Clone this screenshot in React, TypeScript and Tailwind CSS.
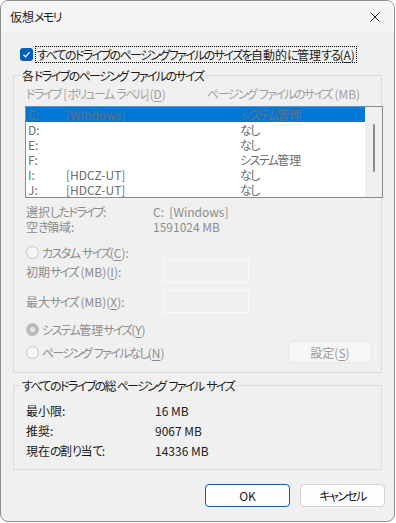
import React from "react";

const drives = [
  { d: "C:", label: "[Windows]", size: "システム管理", sel: true },
  { d: "D:", label: "", size: "なし" },
  { d: "E:", label: "", size: "なし" },
  { d: "F:", label: "", size: "システム管理" },
  { d: "I:", label: "[HDCZ-UT]", size: "なし" },
  { d: "J:", label: "[HDCZ-UT]", size: "なし" },
];

const totals = [
  { k: "最小限:", v: "16 MB" },
  { k: "推奨:", v: "9067 MB" },
  { k: "現在の割り当て:", v: "14336 MB" },
];

// かな部分だけ字間を詰める（UIフォントのかなは幅が狭い）
function T({ s }: { s: string }) {
  const parts = s.split(/([\u3040-\u30ff]+)/);
  return (
    <>
      {parts.map((p, i) =>
        /^[\u3040-\u30ff]+$/.test(p) ? (
          <span key={i} className="tracking-[-1.6px]">
            {p}
          </span>
        ) : (
          <React.Fragment key={i}>{p}</React.Fragment>
        )
      )}
    </>
  );
}

// アクセスキーの下線
function U({ c }: { c: string }) {
  return <span className="underline underline-offset-2">{c}</span>;
}

function Radio({ checked }: { checked?: boolean }) {
  if (checked) {
    return (
      <span className="w-[13px] h-[13px] rounded-full bg-[#b9b9b9] flex items-center justify-center shrink-0">
        <span className="w-[5px] h-[5px] rounded-full bg-[#e6e6e6]" />
      </span>
    );
  }
  return (
    <span className="w-[13px] h-[13px] rounded-full border border-[#c4c4c4] bg-[#f6f6f6] shrink-0" />
  );
}

export default function App() {
  return (
    <div className="w-[396px] h-[523px] bg-white font-['Noto_Sans_CJK_JP','Noto_Sans',sans-serif] [font-feature-settings:'palt'] text-[12px] text-[#1b1b1b]">
      <div className="w-[395px] h-[522px] bg-[#f0f0f0] border border-[#8f8f8f] rounded-[8px] overflow-hidden flex flex-col">
        {/* タイトルバー */}
        <div className="h-[31px] bg-[#f5f5f5] flex items-center justify-between pl-[9px] pr-[14px]">
          <span className="text-[12px] leading-[15px]">
            <T s="仮想メモリ" />
          </span>
          <svg width="10" height="10" viewBox="0 0 10 10">
            <path d="M0.5 0.5 L9.5 9.5 M9.5 0.5 L0.5 9.5" stroke="#1b1b1b" strokeWidth="1" />
          </svg>
        </div>

        {/* 自動管理チェック */}
        <div className="mt-[14px] ml-[19px] h-[17px] flex items-center">
          <span className="w-[13px] h-[13px] rounded-[3px] bg-[#005fb8] flex items-center justify-center shrink-0">
            <svg width="9" height="9" viewBox="0 0 9 9">
              <path d="M1.5 4.8 L3.6 6.8 L7.6 2.2" fill="none" stroke="white" strokeWidth="1.2" />
            </svg>
          </span>
          <span className="ml-[2px] h-[17px] px-[1px] border border-dotted border-black flex items-center leading-[15px] whitespace-nowrap">
            <T s="すべてのドライブのページング ファイルのサイズを自動的に管理する" />(<U c="A" />)
          </span>
        </div>

        {/* 各ドライブ */}
        <fieldset className="mt-[5px] ml-[12px] w-[369px] min-w-0 border border-[#dcdcdc] px-[12px] pb-[9px]">
          <legend className="ml-[-5px] px-[1px] leading-[15px]">
            <T s="各ドライブのページング ファイルのサイズ" />
          </legend>
          <div className="mt-[3px] h-[15px] flex leading-[15px] text-[#a0a0a0] whitespace-nowrap">
            <span className="w-[181px]">
              <T s="ドライブ [ボリューム ラベル]" />(<U c="D" />)
            </span>
            <span>
              <T s="ページング ファイルのサイズ (MB)" />
            </span>
          </div>

          <div className="mt-[5px] -ml-px w-[358px] h-[92px] border border-[#8a8a8a] bg-white flex">
            <div className="flex-1 flex flex-col">
              {drives.map((r) => (
                <div
                  key={r.d}
                  className={`h-[15px] flex leading-[15px] pl-[2px] ${
                    r.sel ? "bg-[#0078d7] text-[#6a6f76]" : "text-[#6d6d6d]"
                  }`}
                >
                  <span className="w-[38px]">{r.d}</span>
                  <span className="w-[174px]">{r.label}</span>
                  <span>
                    <T s={r.size} />
                  </span>
                </div>
              ))}
            </div>
            <div className="w-[17px] bg-[#f0f0f0] flex justify-center">
              <div className="mt-[17px] w-[2px] h-[48px] rounded-full bg-[#8a8a8a]" />
            </div>
          </div>

          <div className="mt-[6px] flex flex-col leading-[15px] text-[#8c8c8c]">
            <div className="h-[15px] flex">
              <span className="w-[127px]">
                <T s="選択したドライブ:" />
              </span>
              <span>C:&nbsp;&nbsp;[Windows]</span>
            </div>
            <div className="h-[15px] flex">
              <span className="w-[127px]">
                <T s="空き領域:" />
              </span>
              <span>1591024 MB</span>
            </div>
          </div>

          <div className="mt-[11px] h-[15px] flex items-center gap-[3px] leading-[15px] text-[#8c8c8c]">
            <Radio />
            <span>
              <T s="カスタム サイズ" />(<U c="C" />):
            </span>
          </div>

          <div className="h-[23px] flex items-center leading-[15px] text-[#8c8c8c]">
            <span className="w-[137px]">
              <T s="初期サイズ (MB)" />(<U c="I" />):
            </span>
            <span className="w-[86px] h-[23px] border border-[#fafafa]" />
          </div>
          <div className="mt-[7px] h-[23px] flex items-center leading-[15px] text-[#8c8c8c]">
            <span className="w-[137px]">
              <T s="最大サイズ (MB)" />(<U c="X" />):
            </span>
            <span className="w-[86px] h-[23px] border border-[#fafafa]" />
          </div>

          <div className="mt-[9px] h-[15px] flex items-center gap-[3px] leading-[15px] text-[#8c8c8c]">
            <Radio checked />
            <span>
              <T s="システム管理サイズ" />(<U c="Y" />)
            </span>
          </div>

          <div className="mt-[4px] h-[22px] flex items-center justify-between -mr-[3px] leading-[15px] text-[#8c8c8c]">
            <div className="flex items-center gap-[3px]">
              <Radio />
              <span>
                <T s="ページング ファイルなし" />(<U c="N" />)
              </span>
            </div>
            <span className="w-[84px] h-[22px] rounded-[4px] border border-[#e8e8e8] bg-[#f6f6f6] flex items-center justify-center text-[#9a9a9a]">
              設定(<U c="S" />)
            </span>
          </div>
        </fieldset>

        {/* 合計 */}
        <fieldset className="mt-[5px] ml-[12px] w-[369px] min-w-0 border border-[#dcdcdc] px-[12px] pb-[9px]">
          <legend className="ml-[-5px] px-[1px] leading-[15px]">
            <T s="すべてのドライブの総ページング ファイル サイズ" />
          </legend>
          <div className="mt-[7px] flex flex-col">
            {totals.map((t) => (
              <div key={t.k} className="h-[20px] flex items-center leading-[15px]">
                <span className="w-[129px]">
                  <T s={t.k} />
                </span>
                <span>{t.v}</span>
              </div>
            ))}
          </div>
        </fieldset>

        {/* ボタン */}
        <div className="mt-[14px] pr-[9px] flex justify-end gap-[10px]">
          <button className="w-[85px] h-[23px] rounded-[4px] border border-[#005fb8] bg-[#fdfdfd] flex items-center justify-center leading-[15px]">
            OK
          </button>
          <button className="w-[85px] h-[23px] rounded-[4px] border border-[#d0d0d0] bg-[#fdfdfd] flex items-center justify-center leading-[15px]">
            <T s="キャンセル" />
          </button>
        </div>
      </div>
    </div>
  );
}
